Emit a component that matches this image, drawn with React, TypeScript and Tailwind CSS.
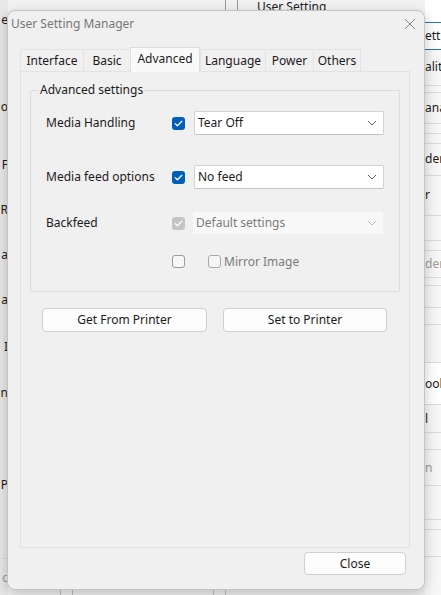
import React from "react";

const Check = ({ color = "#ffffff" }: { color?: string }) => (
  <svg width="13" height="13" viewBox="0 0 13 13" className="block">
    <path d="M3.2 6.6 L5.4 8.7 L9.8 4.3" fill="none" stroke={color} strokeWidth="1.3" strokeLinecap="round" strokeLinejoin="round" />
  </svg>
);

const Chevron = ({ color = "#5f5f5f" }: { color?: string }) => (
  <svg width="10" height="6" viewBox="0 0 10 6" className="block">
    <path d="M1 1 L5 5 L9 1" fill="none" stroke={color} strokeWidth="1" />
  </svg>
);

function CheckedBox() {
  return (
    <div className="w-[13px] h-[13px] rounded-[3px] bg-[#005fb8] shrink-0">
      <Check />
    </div>
  );
}

function DisabledCheckedBox() {
  return (
    <div className="w-[13px] h-[13px] rounded-[3px] bg-[#c5c5c5] shrink-0">
      <Check />
    </div>
  );
}

function EmptyBox({ faded = false }: { faded?: boolean }) {
  return (
    <div
      className={
        faded
          ? "w-[13px] h-[13px] rounded-[3px] border border-[#a8a8a8] bg-[#f6f6f6] shrink-0"
          : "w-[13px] h-[13px] rounded-[3px] border border-[#9a9a9a] bg-[#f7f7f7] shrink-0"
      }
    />
  );
}

function Select({ value }: { value: string }) {
  return (
    <div className="w-[190px] h-[24px] bg-white border border-[#d2d2d2] border-b-[#c4c4c4] rounded-[2px] flex items-center pl-[3px] pr-[6px]">
      <span className="flex-1 text-[12px] text-[#1b1b1b] leading-none">{value}</span>
      <Chevron />
    </div>
  );
}

function DisabledSelect({ value }: { value: string }) {
  return (
    <div className="w-[190px] h-[22px] bg-[#f8f8f8] rounded-[2px] flex items-center pl-[3px] pr-[6px] -ml-px">
      <span className="flex-1 text-[12px] text-[#7b7b7b] leading-none">{value}</span>
      <Chevron color="#b8b8b8" />
    </div>
  );
}

const tabs = [
  { name: "Interface", w: 63 },
  { name: "Basic", w: 47 },
  { name: "Advanced", w: 70 },
  { name: "Language", w: 65 },
  { name: "Power", w: 48 },
  { name: "Others", w: 48 },
];

type Row = { h: number; t?: string; gray?: boolean; line?: boolean; sel?: boolean; white?: boolean };

const leftRows: Row[] = [
  { h: 8 },
  { h: 24, t: "e" },
  { h: 63 },
  { h: 24, t: "o" },
  { h: 34 },
  { h: 24, t: "F" },
  { h: 21 },
  { h: 24, t: "R" },
  { h: 21 },
  { h: 24, t: "a" },
  { h: 21 },
  { h: 24, t: "a" },
  { h: 23 },
  { h: 24, t: "I" },
  { h: 22 },
  { h: 24, t: "n" },
  { h: 68 },
  { h: 24, t: "P" },
  { h: 62, line: true },
  { h: 7 },
  { h: 24, t: "c", gray: true },
];

const rightRows: Row[] = [
  { h: 22, white: true },
  { h: 28, t: "etti", sel: true },
  { h: 36, t: "alit", line: true },
  { h: 7, line: true },
  { h: 31, t: "ana", line: true },
  { h: 10, line: true },
  { h: 10, line: true },
  { h: 32, t: "der", line: true },
  { h: 40, t: "r", line: true },
  { h: 25, line: true },
  { h: 10, line: true },
  { h: 27, t: "der", gray: true, line: true },
  { h: 8, line: true },
  { h: 22, line: true },
  { h: 18, line: true },
  { h: 38, line: true },
  { h: 42, t: "ool", white: true, line: true },
  { h: 28, t: "l", line: true },
  { h: 17, line: true },
  { h: 36, t: "n", gray: true, line: true },
  { h: 34, line: true },
  { h: 10, line: true },
  { h: 27, line: true },
  { h: 38 },
];

function StripRow({ r, align }: { r: Row; align: "left" | "right" }) {
  const base = "flex items-center text-[12px] whitespace-nowrap overflow-hidden";
  const border = r.sel
    ? " border-y border-[#2a6fc4] bg-white"
    : r.line
    ? " border-b border-[#dcdcdc]"
    : "";
  const bg = r.white && !r.sel ? " bg-white" : "";
  const color = r.gray ? " text-[#9a9a9a]" : " text-[#1b1b1b]";
  const just = align === "left" ? " justify-end" : " justify-start";
  return (
    <div style={{ height: r.h }} className={base + border + bg + color + just}>
      {r.t}
    </div>
  );
}

function Background() {
  return (
    <div className="absolute inset-0 bg-[#f2f2f2] flex">
      {/* window behind, left edge */}
      <div className="w-[8px] flex flex-col bg-[#e8e8e8] overflow-hidden">
        {leftRows.map((r, i) => (
          <StripRow key={i} r={r} align="left" />
        ))}
      </div>
      {/* window behind, middle (only top & bottom edges visible) */}
      <div className="flex-1 flex flex-col justify-between">
        <div className="h-[10px] flex items-start pl-[217px] gap-[11px]">
          <div className="w-px h-[10px] bg-[#9a9a9a]" />
          <div className="w-px h-[10px] bg-[#9a9a9a]" />
          <span className="ml-[8px] text-[12px] leading-[16px] text-[#1b1b1b] -mt-[1px]">User Setting</span>
        </div>
        <div className="h-[6px] flex pl-[52px]">
          <div className="w-px h-full bg-[#bdbdbd]" />
          <div className="ml-[11px] w-px h-full bg-[#bdbdbd]" />
          <div className="ml-[140px] w-px h-full bg-[#bdbdbd]" />
          <div className="ml-[11px] w-px h-full bg-[#bdbdbd]" />
        </div>
      </div>
      {/* window behind, right edge */}
      <div className="w-[16px] flex flex-col bg-[#f7f7f7] overflow-hidden">
        {rightRows.map((r, i) => (
          <StripRow key={i} r={r} align="right" />
        ))}
      </div>
    </div>
  );
}

export default function App() {
  return (
    <div
      className="relative w-[441px] h-[595px] overflow-hidden"
      style={{ fontFamily: '"Noto Sans", "Open Sans", sans-serif' }}
    >
      <Background />
      {/* Dialog window */}
      <div className="absolute left-[7px] top-[10px] w-[418px] h-[580px] rounded-[8px] border border-[#c4c4c4] bg-[#f0f0f0] shadow-[0_4px_14px_rgba(0,0,0,0.22)] flex flex-col">
        {/* Title bar */}
        <div className="h-[24px] flex items-center pl-[3px] pr-[8px] pt-[1px]">
          <span className="flex-1 text-[12px] text-[#767676] leading-none">User Setting Manager</span>
          <svg width="12" height="12" viewBox="0 0 12 12" className="block">
            <path d="M1 1 L11 11 M11 1 L1 11" stroke="#8a8a8a" strokeWidth="1" />
          </svg>
        </div>

        <div className="flex-1 flex flex-col px-[12px] pt-[12px]">
          {/* Tab header */}
          <div className="flex items-end h-[24px] relative z-10">
            {tabs.map((t) =>
              t.name === "Advanced" ? (
                <div
                  key={t.name}
                  style={{ width: t.w }}
                  className="h-[25px] -mb-px bg-[#f9f9f9] border border-b-0 border-[#dddddd] flex items-start justify-center pt-[2px] text-[12px] text-[#1b1b1b]"
                >
                  {t.name}
                </div>
              ) : (
                <div
                  key={t.name}
                  style={{ width: t.w }}
                  className="h-[22px] bg-[#f0f0f0] border-t border-l border-[#e3e3e3] last:border-r flex items-center justify-center text-[12px] text-[#1b1b1b]"
                >
                  {t.name}
                </div>
              )
            )}
          </div>

          {/* Tab panel */}
          <div className="h-[477px] w-[390px] border border-[#e2e2e2] bg-[#f0f0f0] px-[9px] pt-[18px] flex flex-col">
            {/* Group box */}
            <div className="relative h-[202px] border border-[#dcdcdc] rounded-[2px] pl-[15px] pt-[20px] flex flex-col">
              <span className="absolute left-[8px] top-[-9px] bg-[#f0f0f0] px-px text-[12px] leading-[16px] text-[#1b1b1b]">
                Advanced settings
              </span>

              <div className="flex items-center h-[24px]">
                <span className="w-[126px] text-[12px] text-[#1b1b1b]">Media Handling</span>
                <CheckedBox />
                <div className="ml-[9px]">
                  <Select value="Tear Off" />
                </div>
              </div>

              <div className="flex items-center h-[24px] mt-[30px]">
                <span className="w-[126px] text-[12px] text-[#1b1b1b]">Media feed options</span>
                <CheckedBox />
                <div className="ml-[9px]">
                  <Select value="No feed" />
                </div>
              </div>

              <div className="flex items-center h-[22px] mt-[23px]">
                <span className="w-[126px] text-[12px] text-[#1b1b1b]">Backfeed</span>
                <DisabledCheckedBox />
                <div className="ml-[9px]">
                  <DisabledSelect value="Default settings" />
                </div>
              </div>

              <div className="flex items-center h-[13px] mt-[21px] pl-[126px]">
                <EmptyBox />
                <div className="ml-[23px] flex items-center gap-[3px]">
                  <EmptyBox faded />
                  <span className="text-[12px] text-[#7b7b7b] leading-none">Mirror Image</span>
                </div>
              </div>
            </div>

            {/* Printer buttons */}
            <div className="flex gap-[16px] mt-[16px] pl-[12px]">
              <button className="w-[165px] h-[24px] rounded-[4px] border border-[#d0d0d0] bg-[#fdfdfd] text-[12px] text-[#1b1b1b]">
                Get From Printer
              </button>
              <button className="w-[164px] h-[24px] rounded-[4px] border border-[#d0d0d0] bg-[#fdfdfd] text-[12px] text-[#1b1b1b]">
                Set to Printer
              </button>
            </div>
          </div>

          {/* Footer */}
          <div className="flex justify-end mt-[4px] pr-[6px]">
            <button className="w-[102px] h-[23px] rounded-[4px] border border-[#d0d0d0] bg-[#fdfdfd] text-[12px] text-[#1b1b1b]">
              Close
            </button>
          </div>
        </div>
      </div>
    </div>
  );
}
